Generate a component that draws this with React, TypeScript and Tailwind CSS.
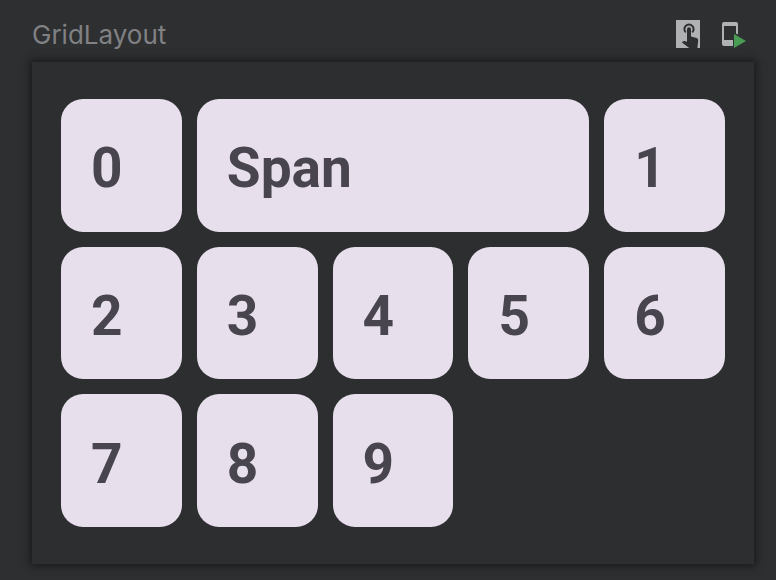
const tiles = [
  { label: '0', wide: false },
  { label: 'Span', wide: true },
  { label: '1', wide: false },
  { label: '2', wide: false },
  { label: '3', wide: false },
  { label: '4', wide: false },
  { label: '5', wide: false },
  { label: '6', wide: false },
  { label: '7', wide: false },
  { label: '8', wide: false },
  { label: '9', wide: false },
]

const InteractiveIcon = () => (
  <svg width="24" height="28" viewBox="0 0 24 28" aria-hidden="true">
    <path d="M0 0H24V28H0Z" fill="#afb1b3" />
    <path
      d="M9.8 12.4A4.6 4.6 0 1 1 16.2 12.4"
      fill="none"
      stroke="#2d2e30"
      strokeWidth="2"
    />
    <path
      d="M11 9.2a2 2 0 0 1 4 0V16.6L20.5 18q1.8.5 1.7 2.2L21.4 28H13.2L6 22.6l.8-1.2q.6-.7 1.6-.4L11 21.8Z"
      fill="#2d2e30"
    />
  </svg>
)

const RunOnDeviceIcon = () => (
  <svg width="24" height="26" viewBox="0 0 24 26" aria-hidden="true">
    <path
      fillRule="evenodd"
      d="M2 0H14a2 2 0 0 1 2 2V12.5L11 10V24H2a2 2 0 0 1-2-2V2A2 2 0 0 1 2 0ZM2 4V18H11V10L14 11.5V4Z"
      fill="#afb1b3"
    />
    <path d="M12 12V26L24 19Z" fill="#499c54" />
  </svg>
)

const App = () => {
  return (
    <div className="min-h-screen bg-[#2e2f31] pl-8 pr-[22px] pt-4 pb-4 font-['Roboto',sans-serif]">
      <header className="flex h-[46px] items-start justify-between pr-2">
        <h1 className="font-['Inter',sans-serif] text-[26px] leading-[38px] text-[#808183]">GridLayout</h1>
        <div className="flex items-start gap-[22px] pt-1">
          <button type="button" aria-label="Start interactive mode" className="block">
            <InteractiveIcon />
          </button>
          <button type="button" aria-label="Run preview" className="block pt-0.5">
            <RunOnDeviceIcon />
          </button>
        </div>
      </header>
      <main className="bg-[#2d2e30] px-[29px] py-[37px] shadow-[0_0_8px_2px_#18191a]">
        <div className="grid min-h-[428px] grid-cols-5 grid-rows-3 gap-[15px]">
          {tiles.map((tile) => (
            <div
              key={tile.label}
              className={`flex items-center rounded-[22px] bg-[#e7dfec] px-[30px] pt-1.5 text-[55px] leading-[72px] font-bold text-[#49454f] ${
                tile.wide ? 'col-span-3' : ''
              }`}
            >
              {tile.label}
            </div>
          ))}
        </div>
      </main>
    </div>
  )
}

export default App
